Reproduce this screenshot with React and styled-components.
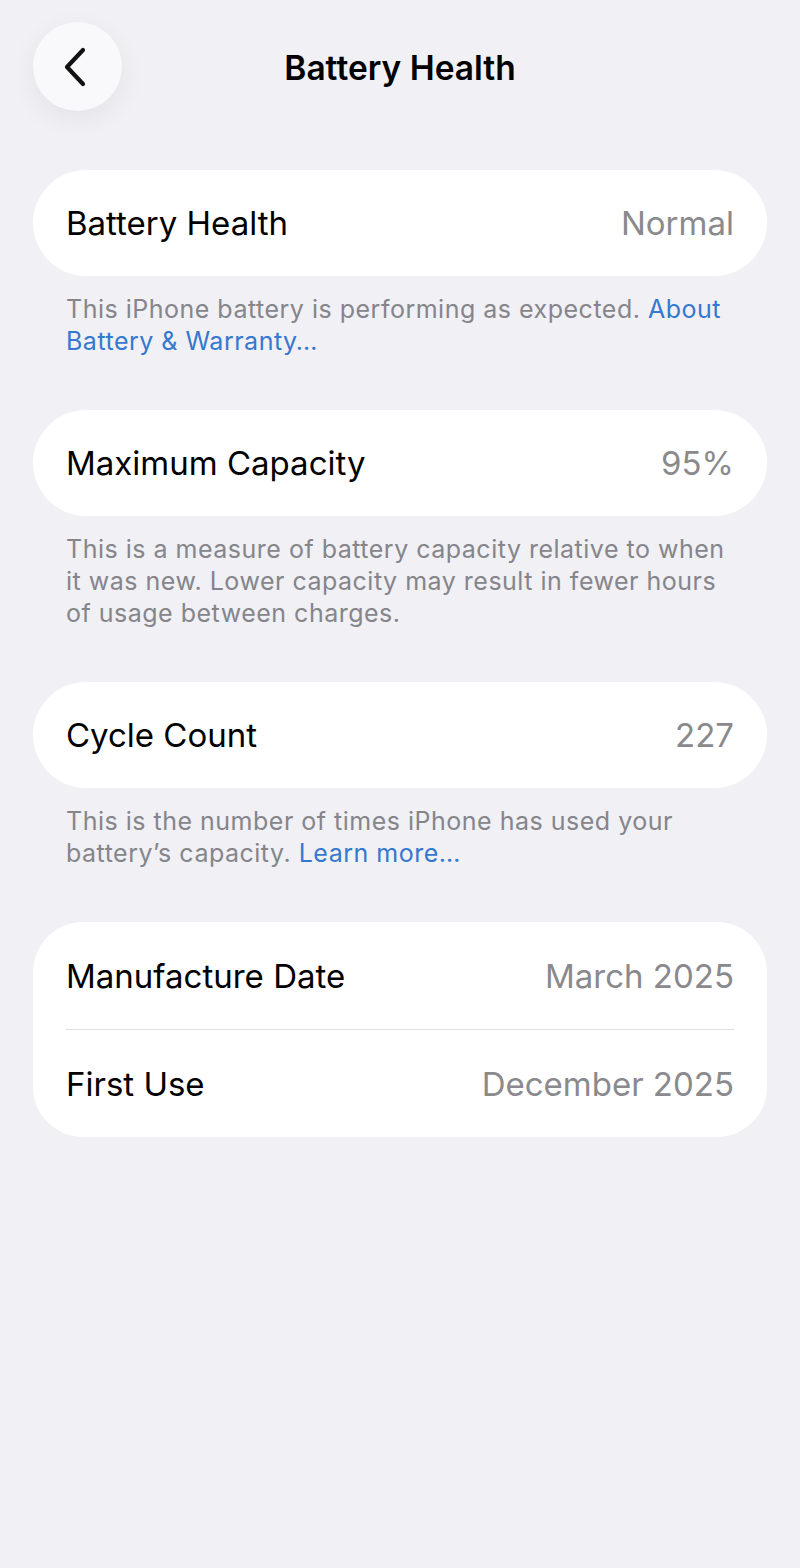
import styled, { createGlobalStyle } from "styled-components";

const GlobalStyle = createGlobalStyle`
    body{
        margin: 0;
        background: #f0f0f5;
        font-family: Inter, "Liberation Sans", sans-serif;
        -webkit-font-smoothing: antialiased;
    }
`;

const sections = [
    {
        rows: [{ label: "Battery Health", value: "Normal" }],
        note: "This iPhone battery is performing as expected. ",
        link: "About Battery & Warranty…",
    },
    {
        rows: [{ label: "Maximum Capacity", value: "95%" }],
        note: "This is a measure of battery capacity relative to when it was new. Lower capacity may result in fewer hours of usage between charges.",
    },
    {
        rows: [{ label: "Cycle Count", value: "227" }],
        note: "This is the number of times iPhone has used your battery’s capacity. ",
        link: "Learn more…",
    },
    {
        rows: [
            { label: "Manufacture Date", value: "March 2025" },
            { label: "First Use", value: "December 2025" },
        ],
    },
];

export default function App(){
    return(
        <Page>
            <GlobalStyle />
            <Header>
                <BackButton aria-label="Back">
                    <svg width="26" height="40" viewBox="0 0 26 40" fill="none">
                        <path d="M21 3 L5 20 L21 37" stroke="#111" strokeWidth="4.2" strokeLinecap="round" strokeLinejoin="round"/>
                    </svg>
                </BackButton>
                <Title>Battery Health</Title>
            </Header>

            <Sections>
                {sections.map((s, i) => (
                    <Section key={i}>
                        <Card $tall={s.rows.length > 1}>
                            {s.rows.map((r, j) => (
                                <Row key={j} $divider={j > 0} $multi={s.rows.length > 1}>
                                    <Label>{r.label}</Label>
                                    <Value>{r.value}</Value>
                                </Row>
                            ))}
                        </Card>
                        {s.note && (
                            <Note>
                                {s.note}
                                {s.link && <Link>{s.link}</Link>}
                            </Note>
                        )}
                    </Section>
                ))}
            </Sections>
        </Page>
    );
}

const Page = styled.div`
    width: 800px;
    min-height: 1568px;
    background: #f0f0f5;
    box-sizing: border-box;
    padding: 22px 33px 0 33px;
`;

const Header = styled.div`
    position: relative;
    height: 90px;
    display: flex;
    align-items: center;
    justify-content: center;
`;

const BackButton = styled.div`
    position: absolute;
    left: 0;
    top: 0;
    width: 89px;
    height: 89px;
    border-radius: 50%;
    background: #f9f9fb;
    box-shadow: 0 8px 28px rgba(0, 0, 0, 0.06);
    display: flex;
    align-items: center;
    justify-content: center;
    padding-right: 6px;
    box-sizing: border-box;
`;

const Title = styled.div`
    font-size: 33.5px;
    font-weight: 600;
    color: #000;
    letter-spacing: 0;
    margin-top: 2px;
`;

const Sections = styled.div`
    margin-top: 58px;
    display: flex;
    flex-direction: column;
`;

const Section = styled.div`
    display: flex;
    flex-direction: column;
    margin-bottom: 53px;
`;

const Card = styled.div`
    background: #fff;
    border-radius: ${p => p.$tall ? "50px" : "53px"};
    padding: 0 33px;
    display: flex;
    flex-direction: column;
`;

const Row = styled.div`
    height: ${p => p.$divider ? "108px" : p.$multi ? "107px" : "106px"};
    display: flex;
    align-items: center;
    justify-content: space-between;
    border-top: ${p => p.$divider ? "1.5px solid #dedee3" : "none"};
    box-sizing: border-box;
`;

const Label = styled.div`
    font-size: 33px;
    color: #000;
    letter-spacing: 0;
`;

const Value = styled.div`
    font-size: 33px;
    color: #8a8a8e;
    letter-spacing: 0;
`;

const Note = styled.div`
    padding: 17px 33px 0 33px;
    font-size: 25px;
    line-height: 32px;
    color: #85858a;
    letter-spacing: 0.5px;
`;

const Link = styled.span`
    color: #3478d0;
`;
